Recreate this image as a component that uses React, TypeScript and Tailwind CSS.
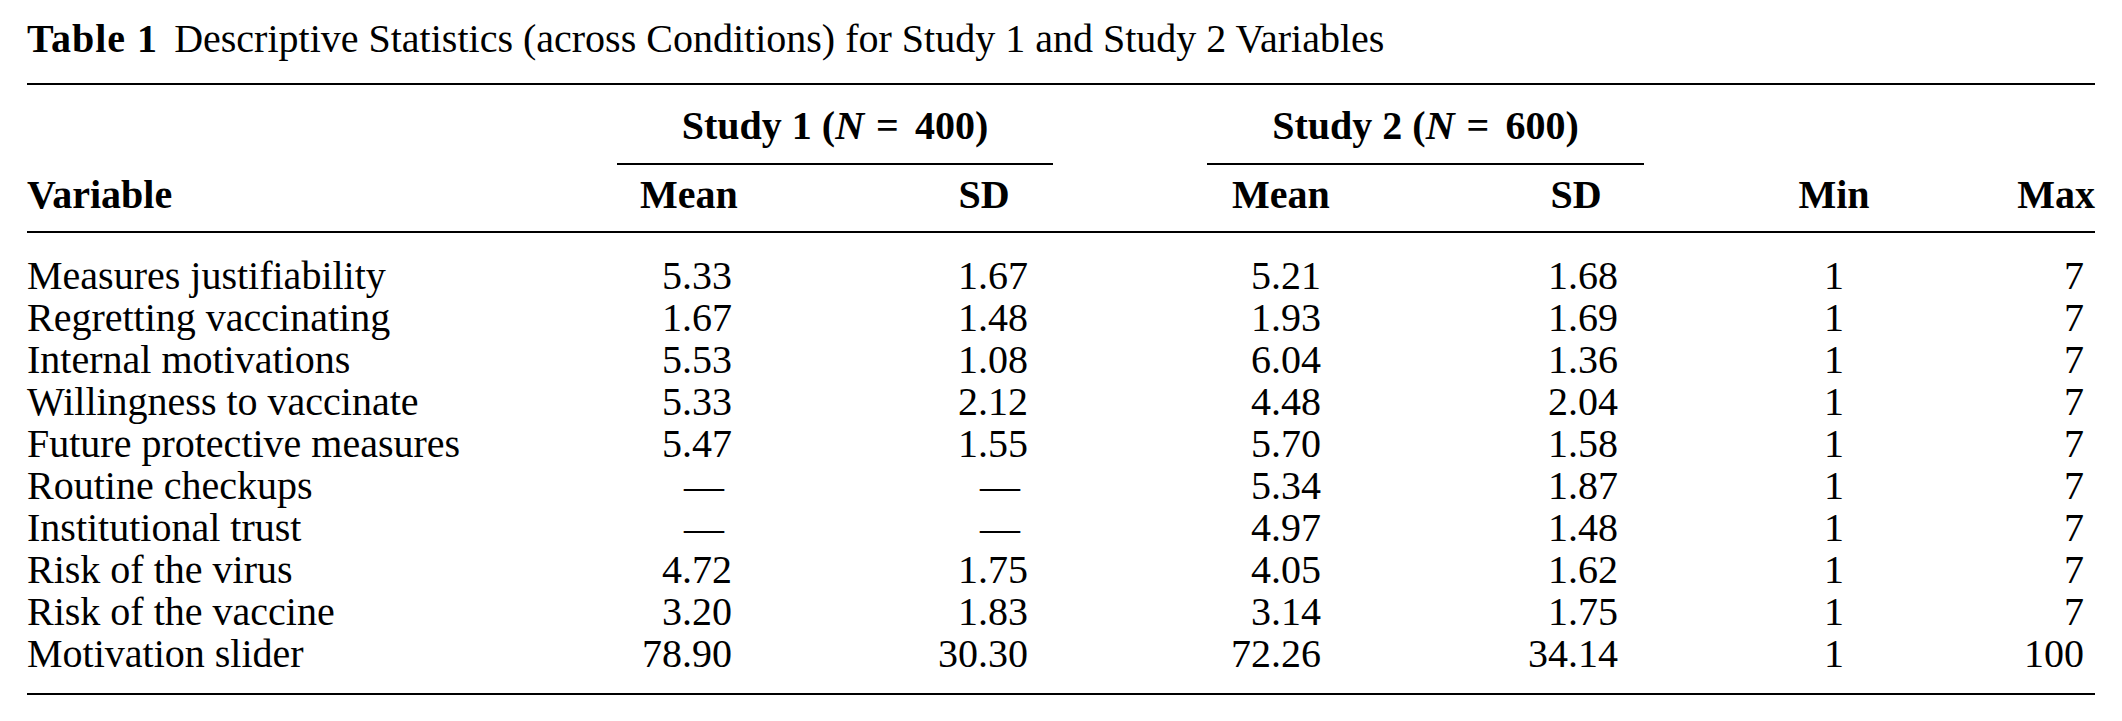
const rows: [string, string, string, string, string, string, string][] = [
  ['Measures justifiability', '5.33', '1.67', '5.21', '1.68', '1', '7'],
  ['Regretting vaccinating', '1.67', '1.48', '1.93', '1.69', '1', '7'],
  ['Internal motivations', '5.53', '1.08', '6.04', '1.36', '1', '7'],
  ['Willingness to vaccinate', '5.33', '2.12', '4.48', '2.04', '1', '7'],
  ['Future protective measures', '5.47', '1.55', '5.70', '1.58', '1', '7'],
  ['Routine checkups', '—', '—', '5.34', '1.87', '1', '7'],
  ['Institutional trust', '—', '—', '4.97', '1.48', '1', '7'],
  ['Risk of the virus', '4.72', '1.75', '4.05', '1.62', '1', '7'],
  ['Risk of the vaccine', '3.20', '1.83', '3.14', '1.75', '1', '7'],
  ['Motivation slider', '78.90', '30.30', '72.26', '34.14', '1', '100'],
];

const cols = 'grid grid-cols-[590px_218px_218px_154px_218px_219px_56px_268px_127px]';

function Num({ v, pr }: { v: string; pr: string }) {
  // dashes sit a little left of the figures
  return <div className={`text-right ${pr}`}>{v === '—' ? <span className="mr-[8px]">—</span> : v}</div>;
}

function StudyHead({ n, total }: { n: number; total: number }) {
  return (
    <div className="col-span-2 text-center border-b-2 border-black pb-[16px] whitespace-nowrap">
      Study {n} (<i>N</i>
      <span className="ml-[12px] mr-[16px]">=</span>
      {total})
    </div>
  );
}

export default function App() {
  return (
    <div
      className="min-h-screen bg-white text-black"
      style={{ fontFamily: '"Liberation Serif", "Times New Roman", serif' }}
    >
      <div className="pl-[27px] w-[2095px] text-[40px] leading-[42px]">
        {/* Caption */}
        <div className="pt-[18px] whitespace-nowrap">
          <span className="font-bold tracking-[1px]">Table 1</span>
          <span className="ml-[16px]">
            Descriptive Statistics (across Conditions) for Study 1 and Study 2 Variables
          </span>
        </div>

        <div className="mt-[23px] h-[2px] bg-black" />

        {/* Header */}
        <div className={`${cols} mt-[20px] font-bold`}>
          <div />
          <StudyHead n={1} total={400} />
          <div />
          <StudyHead n={2} total={600} />
          <div />
          <div />
          <div />

          <div className="mt-[9px]">Variable</div>
          <div className="mt-[9px] text-center pr-[74px]">Mean</div>
          <div className="mt-[9px] text-center pl-[80px]">SD</div>
          <div />
          <div className="mt-[9px] text-center pr-[70px]">Mean</div>
          <div className="mt-[9px] text-center pl-[83px]">SD</div>
          <div />
          <div className="mt-[9px] text-center">Min</div>
          <div className="mt-[9px] text-right">Max</div>
        </div>

        <div className="mt-[15px] h-[2px] bg-black" />

        {/* Body */}
        <div className="pt-[22px]">
          {rows.map((r) => (
            <div key={r[0]} className={cols}>
              <div className="whitespace-nowrap">{r[0]}</div>
              <Num v={r[1]} pr="pr-[103px]" />
              <Num v={r[2]} pr="pr-[25px]" />
              <div />
              <Num v={r[3]} pr="pr-[104px]" />
              <Num v={r[4]} pr="pr-[26px]" />
              <div />
              <div className="text-center">{r[5]}</div>
              <div className="text-right pr-[11px]">{r[6]}</div>
            </div>
          ))}
        </div>

        <div className="mt-[18px] h-[2px] bg-black" />
      </div>
    </div>
  );
}
